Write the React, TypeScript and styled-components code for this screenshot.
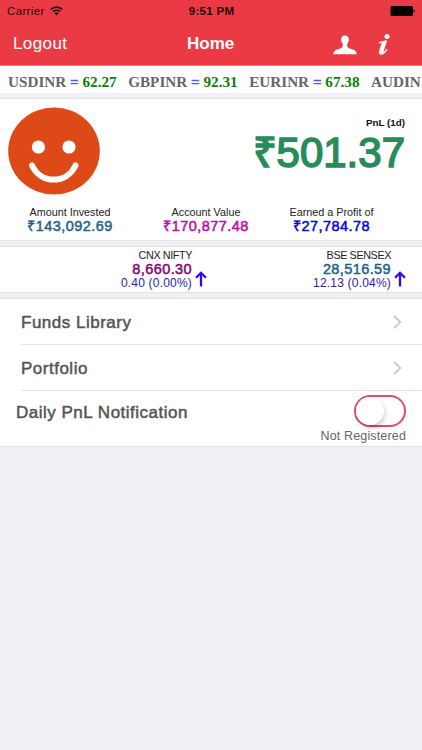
import styled, { createGlobalStyle } from 'styled-components';

const COLORS = {
    red: '#ea3a44',
    page: '#efeff4',
    line: '#e2e1e7',
    text: '#555555',
    blue: '#1f6288',
    green: '#288b5b',
}

const RATES = [
    { name: 'USDINR', value: '62.27' },
    { name: 'GBPINR', value: '92.31' },
    { name: 'EURINR', value: '67.38' },
    { name: 'AUDIN' },
]

const TOTALS = [
    { label: 'Amount Invested', value: '₹143,092.69', color: COLORS.blue },
    { label: 'Account Value', value: '₹170,877.48', color: '#c00aa4' },
    { label: 'Earned a Profit of', value: '₹27,784.78', color: '#0505e6' },
]

const INDICES = [
    { label: 'CNX NIFTY', value: '8,660.30', change: '0.40 (0.00%)', color: '#80087a' },
    { label: 'BSE SENSEX', value: '28,516.59', change: '12.13 (0.04%)', color: COLORS.blue },
]

export default function App() {
    return (
        <>
            <GlobalStyle />
            <Screen>
                <Header>
                    <StatusBar>
                        <Carrier>
                            Carrier
                            <WifiIcon />
                        </Carrier>
                        <Clock>9:51 PM</Clock>
                        <BatteryIcon />
                    </StatusBar>
                    <NavBar>
                        <Logout>Logout</Logout>
                        <Title>Home</Title>
                        <Actions>
                            <PersonIcon />
                            <InfoIcon />
                        </Actions>
                    </NavBar>
                </Header>

                <Ticker>
                    {RATES.map(rate => (
                        <Rate key={rate.name}>
                            {rate.name}
                            {rate.value && <> <Equals>=</Equals> <RateValue>{rate.value}</RateValue></>}
                        </Rate>
                    ))}
                </Ticker>

                <Summary>
                    <SummaryTop>
                        <Smiley />
                        <Pnl>
                            <PnlLabel>PnL (1d)</PnlLabel>
                            <PnlValue>₹501.37</PnlValue>
                        </Pnl>
                    </SummaryTop>
                    <Totals>
                        {TOTALS.map(total => (
                            <Total key={total.label}>
                                <TotalLabel>{total.label}</TotalLabel>
                                <Amount $color={total.color}>{total.value}</Amount>
                            </Total>
                        ))}
                    </Totals>
                </Summary>

                <Indices>
                    {INDICES.map(index => (
                        <Index key={index.label}>
                            <IndexText>
                                <IndexLabel>{index.label}</IndexLabel>
                                <IndexValue $color={index.color}>{index.value}</IndexValue>
                                <IndexChange>{index.change}</IndexChange>
                            </IndexText>
                            <ArrowUp />
                        </Index>
                    ))}
                </Indices>

                <Menu>
                    <MenuRow>
                        <MenuLabel>Funds Library</MenuLabel>
                        <Chevron />
                    </MenuRow>
                    <MenuRow>
                        <MenuLabel>Portfolio</MenuLabel>
                        <Chevron />
                    </MenuRow>
                    <NotificationRow>
                        <NotificationLabel>Daily PnL Notification</NotificationLabel>
                        <NotificationState>
                            <Switch><Knob /></Switch>
                            <StateText>Not Registered</StateText>
                        </NotificationState>
                    </NotificationRow>
                </Menu>
            </Screen>
        </>
    )
}

const WifiIcon = () => (
    <svg width="13" height="10" viewBox="0 0 13 10" fill="none" stroke="#1c0a0b" strokeWidth="1.6">
        <path d="M0.8 3.4C4 0.3 9 0.3 12.2 3.4" />
        <path d="M2.9 5.6C4.9 3.7 8.1 3.7 10.1 5.6" />
        <path d="M6.5 9.4L4.2 7.1C5.5 6 7.5 6 8.8 7.1Z" fill="#1c0a0b" stroke="none" />
    </svg>
)

const BatteryIcon = () => (
    <svg width="26" height="10" viewBox="0 0 26 10">
        <rect x="0.5" y="0" width="22.5" height="10" rx="1.5" fill="#0a0000" />
        <path d="M23.6 3.2C25.2 3.6 25.2 6.4 23.6 6.8Z" fill="#0a0000" />
    </svg>
)

const PersonIcon = () => (
    <svg width="24" height="20" viewBox="0 0 24 20" fill="#ffffff">
        <path d="M12 0.6C9.3 0.6 8 2.3 8.2 4.8C8.3 6.6 8.9 7.8 9.7 8.8V11.4C9.500 12.600 7.500 13.300 4.800 14.300C1.800 15.400 0.500 16.600 0.200 19.300H23.800C23.500 16.600 22.200 15.400 19.200 14.300C16.500 13.300 14.500 12.600 14.300 11.400V8.800C15.100 7.800 15.700 6.600 15.800 4.800C16 2.300 14.700 0.600 12 0.600Z" />
    </svg>
)

const InfoIcon = () => (
    <svg width="12" height="21" viewBox="0 0 12 21" fill="#ffffff">
        <circle cx="9" cy="2.500" r="2.500" />
        <path d="M1.3 8.1C3.8 7.9 6 7.3 7.8 6.6L8.8 6.7L5.4 17C5.1 18 5.6 18.2 6.2 17.7C7.1 17 7.8 16 8.4 15.1L9.2 15.6C7.6 18.7 5.7 20.4 3.3 20.4C1.3 20.4 0.6 19 1.2 17.2L3.6 9.9C3.9 9 3.2 8.8 1.1 8.8Z" stroke="#ffffff" strokeWidth="0.5" />
    </svg>
)

const Smiley = () => (
    <svg width="92" height="88" viewBox="0 0 92 88">
        <ellipse cx="46" cy="44" rx="45.8" ry="43.6" fill="#dd4a17" />
        <circle cx="30.4" cy="40" r="6.6" fill="#ffffff" />
        <circle cx="61" cy="40" r="6.6" fill="#ffffff" />
        <path d="M24 58.500C33 77.300 58.500 77.300 67.500 58.500" fill="none" stroke="#ffffff" strokeWidth="6" strokeLinecap="round" />
    </svg>
)

const ArrowUp = () => (
    <svg width="12" height="16" viewBox="0 0 12 16" fill="none" stroke="#2d0af0" strokeWidth="2.300">
        <path d="M6 15.500V2" />
        <path d="M1 6.800L6 1.800L11 6.800" />
    </svg>
)

const Chevron = () => (
    <svg width="9" height="14" viewBox="0 0 9 14" fill="none" stroke="#c3c3c8" strokeWidth="1.7">
        <path d="M1 0.900L7.200 7L1 13.100" />
    </svg>
)

const GlobalStyle = createGlobalStyle`
    body {
        margin: 0;
        background: ${COLORS.page};
        font-family: 'Liberation Sans', Arial, sans-serif;
    }
    * {
        box-sizing: border-box;
    }
    svg {
        display: block;
        flex-shrink: 0;
    }
`
const Screen = styled.div`
    width: 422px;
    height: 750px;
    overflow: hidden;
    display: flex;
    flex-direction: column;
    background: ${COLORS.page};
`
const Header = styled.header`
    height: 66px;
    background: ${COLORS.red};
    border-bottom: 1px solid #ee7b82;
`
const StatusBar = styled.div`
    height: 22px;
    padding: 0 6px 0 7px;
    display: grid;
    grid-template-columns: 1fr auto 1fr;
    align-items: center;
    font-size: 11.5px;
    line-height: 22px;
    color: #1c0a0b;

    > svg {
        justify-self: end;
    }
`
const Carrier = styled.div`
    display: flex;
    align-items: center;
    gap: 5px;
    letter-spacing: 0.350px;
`
const Clock = styled.div`
    font-weight: 600;
    font-size: 11.5px;
    letter-spacing: 0.3px;
`
const NavBar = styled.nav`
    height: 43px;
    padding: 0 32px 0 13px;
    display: grid;
    grid-template-columns: 174px 1fr auto;
    align-items: center;
    font-size: 17px;
    line-height: 43px;
    color: #ffffff;
`
const Logout = styled.div`
    letter-spacing: 0.4px;
`
const Title = styled.div`
    font-weight: 700;
`
const Actions = styled.div`
    display: flex;
    align-items: center;
    gap: 21px;
    padding-top: 2px;
`
const Ticker = styled.div`
    height: 27px;
    padding-left: 8px;
    display: flex;
    gap: 11.500px;
    overflow: hidden;
    white-space: nowrap;
    background: #ffffff;
    font-family: 'Liberation Serif', 'Times New Roman', serif;
    font-weight: 700;
    font-size: 15.200px;
    line-height: 32px;
`
const Rate = styled.div`
    flex-shrink: 0;
    color: #666666;
`
const Equals = styled.span`
    color: #5555ff;
    -webkit-text-stroke: 0.400px #5555ff;
`
const RateValue = styled.span`
    color: #0a800a;
`
const Card = styled.section`
    background: #ffffff;
    border-top: 1px solid ${COLORS.line};
    border-bottom: 1px solid ${COLORS.line};
`
const Summary = styled(Card)`
    height: 143px;
    margin-top: 5px;
`
const SummaryTop = styled.div`
    height: 107px;
    padding: 8px 17px 0 8px;
    display: flex;
    justify-content: space-between;
`
const Pnl = styled.div`
    padding-top: 9px;
    text-align: right;
`
const PnlLabel = styled.div`
    font-weight: 600;
    font-size: 9.800px;
    line-height: 14px;
    color: #111111;
`
const PnlValue = styled.div`
    font-size: 42px;
    line-height: 46px;
    color: ${COLORS.green};
    -webkit-text-stroke: 1.600px ${COLORS.green};
`
const Totals = styled.div`
    padding: 0 36px 0 5px;
    display: grid;
    grid-template-columns: 130px 142px 1fr;
`
const Total = styled.div`
    display: flex;
    flex-direction: column;
    align-items: center;
    white-space: nowrap;
`
const TotalLabel = styled.div`
    font-size: 10.800px;
    line-height: 12px;
    color: #222222;
`
const Amount = styled.div<{ $color: string }>`
    font-size: 14.500px;
    line-height: 16px;
    letter-spacing: 0.450px;
    color: ${p => p.$color};
    -webkit-text-stroke: 0.500px ${p => p.$color};
`
const Indices = styled(Card)`
    height: 47px;
    margin-top: 5px;
    padding: 2px 16px 0 0;
    display: grid;
    grid-template-columns: 207px 1fr;
`
const Index = styled.div`
    display: flex;
    justify-content: flex-end;
    gap: 3px;

    > svg {
        margin-top: 22px;
    }
`
const IndexText = styled.div`
    text-align: right;
    white-space: nowrap;
`
const IndexLabel = styled.div`
    font-size: 10.800px;
    line-height: 13px;
    letter-spacing: -0.400px;
    color: #222222;
`
const IndexValue = styled.div<{ $color: string }>`
    font-size: 14.500px;
    line-height: 14px;
    letter-spacing: 0.400px;
    color: ${p => p.$color};
    -webkit-text-stroke: 0.500px ${p => p.$color};
`
const IndexChange = styled.div`
    font-size: 12px;
    line-height: 14px;
    letter-spacing: 0.200px;
    color: #2a24a8;
`
const Menu = styled(Card)`
    height: 149px;
    margin-top: 5px;
`
const MenuRow = styled.div`
    height: 46px;
    margin-left: 21px;
    padding-right: 20px;
    display: flex;
    justify-content: space-between;
    align-items: center;
    border-bottom: 1px solid #e4e4e6;
`
const MenuLabel = styled.div`
    padding-top: 2px;
    font-size: 17px;
    letter-spacing: 0.500px;
    color: ${COLORS.text};
    -webkit-text-stroke: 0.500px ${COLORS.text};
`
const NotificationRow = styled.div`
    height: 55px;
    padding: 4px 16px 0 16px;
    display: flex;
    justify-content: space-between;
`
const NotificationLabel = styled.div`
    font-size: 17px;
    line-height: 35px;
    letter-spacing: 0.500px;
    color: ${COLORS.text};
    -webkit-text-stroke: 0.500px ${COLORS.text};
`
const NotificationState = styled.div`
    display: flex;
    flex-direction: column;
    align-items: flex-end;
`
const Switch = styled.div`
    width: 52px;
    height: 32px;
    border: 2px solid #e04c6c;
    border-radius: 16px;
    background: #ffffff;
`
const Knob = styled.div`
    width: 28px;
    height: 28px;
    border-radius: 50%;
    background: #ffffff;
    box-shadow: 1px 3px 5px rgba(0, 0, 0, 0.2);
`
const StateText = styled.div`
    font-size: 12.500px;
    line-height: 19px;
    letter-spacing: 0.150px;
    color: #666666;
`
